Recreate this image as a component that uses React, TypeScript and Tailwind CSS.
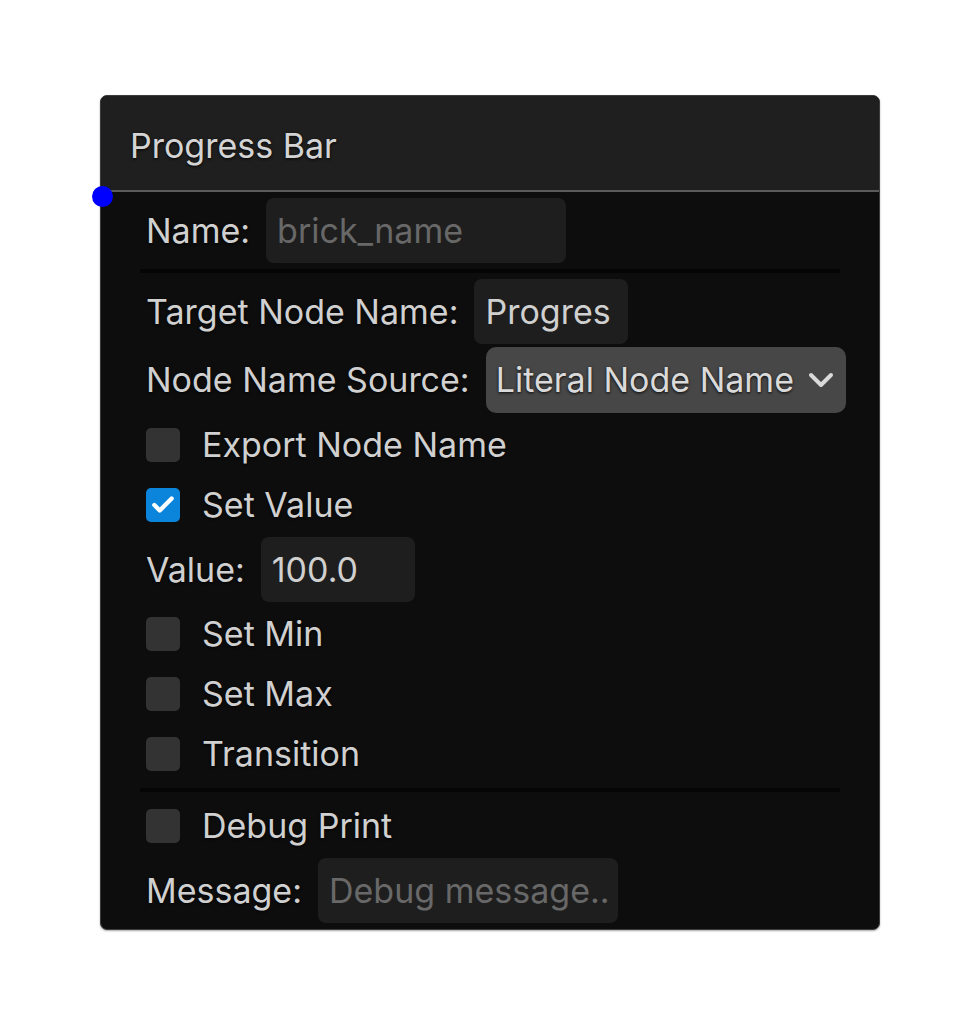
import React from 'react';
import { Check } from 'lucide-react';

const font = { fontFamily: 'Inter, "Noto Sans", sans-serif' };
const shadow = '[text-shadow:0_1px_3px_rgba(0,0,0,0.9)]';

const Field: React.FC<{ label: string; width: string; value?: string; placeholder?: string }> = ({ label, width, value, placeholder }) => (
  <div className="flex items-center gap-4 pl-[6px]">
    <span className={`text-[#d0d0d0] ${shadow}`}>{label}</span>
    <div className={`${width} h-[65px] rounded-lg bg-[#1e1e1e] px-[11px] flex items-center overflow-hidden whitespace-nowrap`}>
      {value ? <span className="text-[#d0d0d0]">{value}</span> : <span className="text-[#686868]">{placeholder}</span>}
    </div>
  </div>
);

const CheckRow: React.FC<{ label: string; checked?: boolean }> = ({ label, checked }) => (
  <div className="flex items-center gap-[22px] pl-[6px] h-[56px]">
    <div className={`w-[34px] h-[34px] rounded-[5px] flex items-center justify-center ${checked ? 'bg-[#0b84db]' : 'bg-[#333333]'}`}>
      {checked && <Check className="w-[26px] h-[26px] text-white" strokeWidth={4} />}
    </div>
    <span className={`text-[#d0d0d0] ${shadow}`}>{label}</span>
  </div>
);

const Separator = () => <div className="h-[4px] my-[2px] bg-[#050505]" />;

export default function App() {
  return (
    <div className="min-h-[1030px] bg-white pt-[95px] pl-[100px]" style={font}>
      <div className="relative w-[780px] rounded-[7px] border border-[#3c3c3c] bg-[#0d0d0d] shadow-[0_1px_2px_rgba(0,0,0,0.35)] text-[34px] leading-none">
        {/* Header */}
        <div className="h-[96px] rounded-t-[7px] bg-[#1f1f1f] border-b-2 border-[#5a5a5a] flex items-center px-[29px] pt-[5px]">
          <span className={`text-[#d4d4d4] ${shadow}`}>Progress Bar</span>
        </div>
        <div className="absolute -left-[9px] top-[90px] w-[21px] h-[21px] rounded-full bg-[#0000ff]" />

        {/* Body */}
        <div className="flex flex-col gap-[4px] px-[39px] pt-[6px] pb-[6px]">
          <Field label="Name:" width="w-[300px]" placeholder="brick_name" />
          <Separator />
          <Field label="Target Node Name:" width="w-[154px]" value="Progres" />
          <div className="flex items-center gap-4 pl-[6px] -mr-[6px] -mt-[1px]">
            <span className={`text-[#d0d0d0] ${shadow}`}>Node Name Source:</span>
            <div className="flex-1 h-[66px] rounded-[10px] bg-[#474747] pl-[10px] pr-[12px] flex items-center justify-between">
              <span className={`text-[#dadada] ${shadow}`}>Literal Node Name</span>
              <svg width="26" height="16" viewBox="0 0 26 16" fill="none" stroke="#dadada" strokeWidth="4" strokeLinecap="round" strokeLinejoin="round">
                <path d="M3 3 L13 13 L23 3" />
              </svg>
            </div>
          </div>
          <CheckRow label="Export Node Name" />
          <CheckRow label="Set Value" checked />
          <Field label="Value:" width="w-[154px]" value="100.0" />
          <CheckRow label="Set Min" />
          <CheckRow label="Set Max" />
          <CheckRow label="Transition" />
          <Separator />
          <CheckRow label="Debug Print" />
          <Field label="Message:" width="w-[300px]" placeholder="Debug message.." />
        </div>
      </div>
    </div>
  );
}
